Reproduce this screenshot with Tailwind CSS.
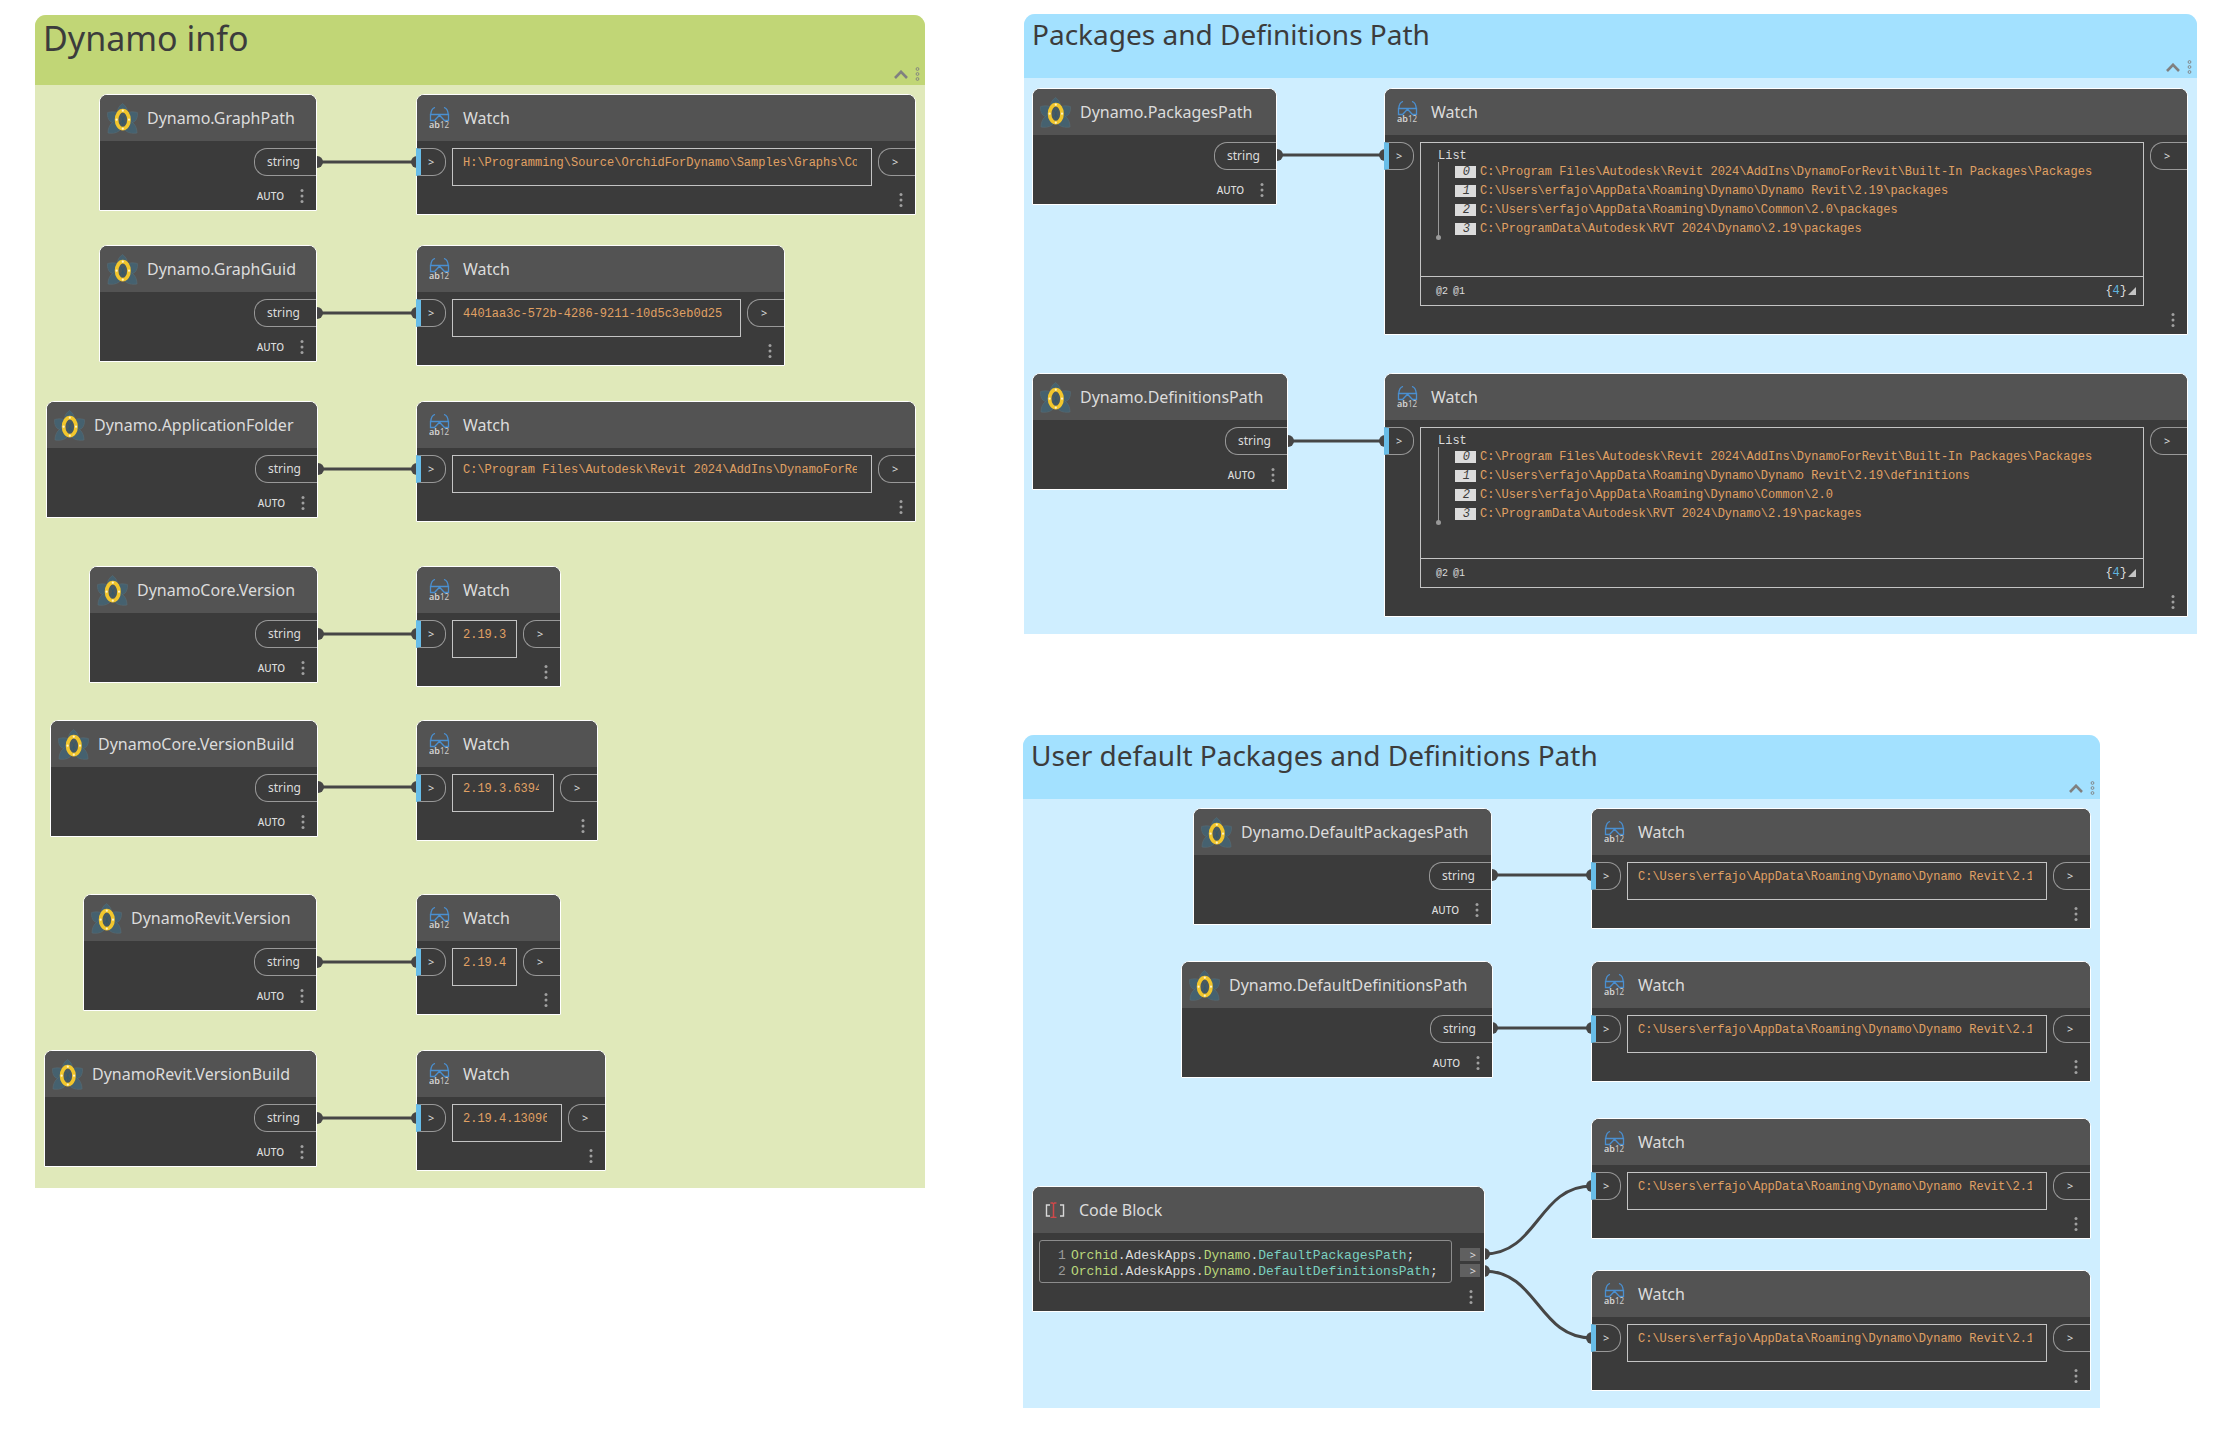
<!DOCTYPE html>
<html lang="en">
<head>
<meta charset="utf-8">
<meta name="viewport" content="width=device-width, initial-scale=1">
<title>Dynamo graph</title>
<script src="https://cdn.jsdelivr.net/npm/@tailwindcss/browser@4"></script>
</head>
<body class="bg-white font-['Noto_Sans','Open_Sans',sans-serif] text-[#dcdcdc]">

<!-- Shared icons -->
<svg class="hidden" aria-hidden="true">
  <symbol id="orchid" viewBox="0 0 31 31">
    <g fill="#45616f" stroke="#5b707a" stroke-width=".5">
      <path d="M15.500 18C8.500 13 9 5 15.500 .5C22 5 22.500 13 15.500 18Z"/>
      <path d="M15.500 18C15 9.500 8 7.500 .6 9.500C-.2 17 4 23 15.500 18Z"/>
      <path d="M15.500 18C16 9.500 23 7.500 30.400 9.500C31.200 17 27 23 15.500 18Z"/>
      <path d="M15.500 17C6 16 1 22 1 30C9 31.500 17 28 15.500 17Z"/>
      <path d="M15.500 17C25 16 30 22 30 30C22 31.500 14 28 15.500 17Z"/>
    </g>
    <ellipse cx="15.800" cy="16.700" rx="6.200" ry="9" fill="#4a5960" stroke="#f2c62c" stroke-width="3.700"/>
    <path d="M13.500 12.500L15.800 16L18 12.500M15.800 16V23M13 21L15.800 17L18.500 21" fill="none" stroke="#35596a" stroke-width="1"/>
    <g fill="#fff3c4"><circle cx="15.800" cy="7.700" r="1.100"/><circle cx="15.800" cy="25.700" r="1.100"/><circle cx="9.600" cy="16.700" r="1.100"/><circle cx="22" cy="16.700" r="1.100"/></g>
  </symbol>
  <symbol id="goggles" viewBox="0 0 21 22">
    <g fill="none" stroke="#4a8fd0" stroke-width="1.300">
      <path d="M6 .5C3.300 1.300 2 4.500 1.800 7.500"/>
      <path d="M15 .5C17.700 1.300 19 4.500 19.200 7.500"/>
      <path d="M1.500 7.500H19.500V13.500H15.500L10.500 8.300L5.500 13.500H1.500Z"/>
    </g>
    <text x="0" y="20.500" font-family="Noto Sans, sans-serif" font-size="9" font-weight="600" fill="#d4d4d4">ab</text>
    <text x="11" y="20.500" font-family="Noto Sans, sans-serif" font-size="8" fill="#cccccc">12</text>
  </symbol>
  <symbol id="brackets" viewBox="0 0 20 16">
    <path d="M5 3H1.500V14H5M15 3H18.500V14H15" fill="none" stroke="#d8d8d8" stroke-width="1.400"/>
    <path d="M5.500 1H7.500L8.500 2L9.500 1H11.500M8.500 2V14.500M5.500 15.500H7.500L8.500 14.500L9.500 15.500H11.500" fill="none" stroke="#d0484a" stroke-width="1.500"/>
  </symbol>
  <symbol id="dots" viewBox="0 0 4 14">
    <g fill="#a0a0a0"><circle cx="2" cy="1.600" r="1.500"/><circle cx="2" cy="7" r="1.500"/><circle cx="2" cy="12.400" r="1.500"/></g>
  </symbol>
  <symbol id="rings" viewBox="0 0 5 14">
    <g fill="none" stroke="#808080" stroke-width=".9"><circle cx="2.500" cy="2" r="1.400"/><circle cx="2.500" cy="7" r="1.400"/><circle cx="2.500" cy="12" r="1.400"/></g>
  </symbol>
  <symbol id="chevron" viewBox="0 0 14 9">
    <path d="M1 8L7 1.800L13 8" fill="none" stroke="#808080" stroke-width="2.600"/>
  </symbol>
</svg>

<main id="canvas" class="relative min-h-screen w-full overflow-hidden">

  <section class="absolute left-[35px] top-[15px] h-[1173px] w-[890px] overflow-hidden rounded-t-[11px] bg-[#e0e9ba]">
    <header class="flex h-[70px] justify-between bg-[#c1d676] pl-2 pr-[5px]">
      <h2 class="text-[34px] leading-[46px] text-[#3c3c3c]">Dynamo info</h2>
      <div class="mb-1 flex items-center gap-[7px] self-end">
        <button aria-label="Collapse group"><svg class="h-[9px] w-[14px]"><use href="#chevron"/></svg></button>
        <button aria-label="Group menu"><svg class="h-[14px] w-[5px]"><use href="#rings"/></svg></button>
      </div>
    </header>
  </section>

  <section class="absolute left-[1024px] top-[14px] h-[620px] w-[1173px] overflow-hidden rounded-t-[11px] bg-[#cfeeff]">
    <header class="flex h-16 justify-between bg-[#a3e1ff] pl-2 pr-[5px]">
      <h2 class="text-[28px] leading-10 text-[#3c3c3c]">Packages and Definitions Path</h2>
      <div class="mb-1 flex items-center gap-[7px] self-end">
        <button aria-label="Collapse group"><svg class="h-[9px] w-[14px]"><use href="#chevron"/></svg></button>
        <button aria-label="Group menu"><svg class="h-[14px] w-[5px]"><use href="#rings"/></svg></button>
      </div>
    </header>
  </section>

  <section class="absolute left-[1023px] top-[735px] h-[673px] w-[1077px] overflow-hidden rounded-t-[11px] bg-[#cfeeff]">
    <header class="flex h-16 justify-between bg-[#a3e1ff] pl-2 pr-[5px]">
      <h2 class="text-[28px] leading-10 text-[#3c3c3c]">User default Packages and Definitions Path</h2>
      <div class="mb-1 flex items-center gap-[7px] self-end">
        <button aria-label="Collapse group"><svg class="h-[9px] w-[14px]"><use href="#chevron"/></svg></button>
        <button aria-label="Group menu"><svg class="h-[14px] w-[5px]"><use href="#rings"/></svg></button>
      </div>
    </header>
  </section>

  <svg id="wires" class="absolute inset-0 h-full w-full" aria-hidden="true"></svg>

  <!-- Code block node -->
  <article class="absolute left-[1032px] top-[1186px] w-[453px] rounded-t-lg border border-white bg-[#3b3b3b]">
    <header class="flex h-[46px] items-center gap-[14px] rounded-t-[7px] bg-[#535353] pl-3">
      <svg class="h-4 w-5"><use href="#brackets"/></svg>
      <h3 class="text-[16px] leading-5">Code Block</h3>
    </header>
    <div class="flex gap-2 pl-1.5 pr-1 pt-[7px]">
      <div class="min-w-0 flex-1 rounded-[3px] border border-[#8c8c8c] pb-0.5 pl-[18px] pt-[7px] font-['Liberation_Mono',monospace] text-[13px] leading-4">
        <div class="flex gap-[5px]"><span class="w-2 text-[#9a9a9a]">1</span><code class="whitespace-pre font-['Liberation_Mono',monospace]"><span class="text-[#b9d77c]">Orchid</span>.AdeskApps.<span class="text-[#b9d77c]">Dynamo</span>.<span class="text-[#7bd1c1]">DefaultPackagesPath</span>;</code></div>
        <div class="flex gap-[5px]"><span class="w-2 text-[#9a9a9a]">2</span><code class="whitespace-pre font-['Liberation_Mono',monospace]"><span class="text-[#b9d77c]">Orchid</span>.AdeskApps.<span class="text-[#b9d77c]">Dynamo</span>.<span class="text-[#7bd1c1]">DefaultDefinitionsPath</span>;</code></div>
      </div>
      <div class="flex w-5 flex-col gap-[3px] pt-2">
        <button class="h-[13px] bg-[#606060] pl-1.5 text-[11px] leading-[13px]">&gt;</button>
        <button class="h-[13px] bg-[#606060] pl-1.5 text-[11px] leading-[13px]">&gt;</button>
      </div>
    </div>
    <footer class="mb-[7px] mt-[7px] flex h-[14px] justify-end pr-[11px]">
      <button aria-label="Node menu"><svg class="h-[14px] w-1"><use href="#dots"/></svg></button>
    </footer>
  </article>
</main>

<script>
const canvas = document.getElementById('canvas');
const add = html => canvas.insertAdjacentHTML('beforeend', html);

// Nodes that read one Dynamo property: [title, position and width]
const sources = [
  ['Dynamo.GraphPath', 'left-[99px] top-[94px] w-[218px]'],
  ['Dynamo.GraphGuid', 'left-[99px] top-[245px] w-[218px]'],
  ['Dynamo.ApplicationFolder', 'left-[46px] top-[401px] w-[272px]'],
  ['DynamoCore.Version', 'left-[89px] top-[566px] w-[229px]'],
  ['DynamoCore.VersionBuild', 'left-[50px] top-[720px] w-[268px]'],
  ['DynamoRevit.Version', 'left-[83px] top-[894px] w-[234px]'],
  ['DynamoRevit.VersionBuild', 'left-[44px] top-[1050px] w-[273px]'],
  ['Dynamo.PackagesPath', 'left-[1032px] top-[88px] w-[245px]'],
  ['Dynamo.DefinitionsPath', 'left-[1032px] top-[373px] w-[256px]'],
  ['Dynamo.DefaultPackagesPath', 'left-[1193px] top-[808px] w-[299px]'],
  ['Dynamo.DefaultDefinitionsPath', 'left-[1181px] top-[961px] w-[312px]'],
];

for (const [title, place] of sources) add(`
  <article class="absolute ${place} rounded-t-lg border border-white bg-[#3b3b3b]">
    <header class="flex h-[46px] items-center gap-[9px] rounded-t-[7px] bg-[#535353] pl-[7px]">
      <svg class="h-[31px] w-[31px] shrink-0"><use href="#orchid"/></svg>
      <h3 class="whitespace-nowrap text-[16px] leading-5">${title}</h3>
    </header>
    <div class="flex justify-end pt-[7px]">
      <div class="h-7 w-[62px] rounded-l-[13px] border border-r-0 border-[#999] pl-3 text-[12px] leading-[26px]">string</div>
    </div>
    <footer class="mb-[7px] mt-[13px] flex h-[14px] items-center justify-end gap-4 pr-3">
      <span class="text-[10px] font-medium leading-[14px]">AUTO</span>
      <button aria-label="Node menu"><svg class="h-[14px] w-1"><use href="#dots"/></svg></button>
    </footer>
  </article>`);

const watchNode = (place, content) => `
  <article class="absolute ${place} rounded-t-lg border border-white bg-[#3b3b3b]">
    <header class="flex h-[46px] items-center gap-[13px] rounded-t-[7px] bg-[#535353] pl-3">
      <svg class="h-[22px] w-[21px] shrink-0"><use href="#goggles"/></svg>
      <h3 class="text-[16px] leading-5">Watch</h3>
    </header>
    <div class="flex items-start gap-1.5 pt-[7px]">
      <div class="-ml-px h-7 w-[30px] rounded-r-[13px] border border-l-[5px] border-[#999] border-l-[#68bde8] pl-[7px] text-[11px] leading-[26px]">&gt;</div>
      ${content}
      <div class="h-7 w-[37px] rounded-l-[13px] border border-r-0 border-[#999] pl-[13px] text-[11px] leading-[26px]">&gt;</div>
    </div>
    <footer class="mb-[7px] mt-[7px] flex h-[14px] justify-end pr-3">
      <button aria-label="Node menu"><svg class="h-[14px] w-1"><use href="#dots"/></svg></button>
    </footer>
  </article>`;

// Watch nodes that show one string: [value, position and width, right padding]
const userPath = 'C:\\Users\\erfajo\\AppData\\Roaming\\Dynamo\\Dynamo Revit\\2.1';
const watches = [
  ['H:\\Programming\\Source\\OrchidForDynamo\\Samples\\Graphs\\Co', 'left-[416px] top-[94px] w-[500px]', 'pr-3.5'],
  ['4401aa3c-572b-4286-9211-10d5c3eb0d25', 'left-[416px] top-[245px] w-[369px]', 'pr-2'],
  ['C:\\Program Files\\Autodesk\\Revit 2024\\AddIns\\DynamoForRe', 'left-[416px] top-[401px] w-[500px]', 'pr-3.5'],
  ['2.19.3', 'left-[416px] top-[566px] w-[145px]', 'pr-2'],
  ['2.19.3.6394', 'left-[416px] top-[720px] w-[182px]', 'pr-3.5'],
  ['2.19.4', 'left-[416px] top-[894px] w-[145px]', 'pr-2'],
  ['2.19.4.13096', 'left-[416px] top-[1050px] w-[190px]', 'pr-3.5'],
  [userPath, 'left-[1591px] top-[808px] w-[500px]', 'pr-3.5'],
  [userPath, 'left-[1591px] top-[961px] w-[500px]', 'pr-3.5'],
  [userPath, 'left-[1591px] top-[1118px] w-[500px]', 'pr-3.5'],
  [userPath, 'left-[1591px] top-[1270px] w-[500px]', 'pr-3.5'],
];

for (const [value, place, padding] of watches) add(watchNode(place, `
  <div class="h-[38px] min-w-0 flex-1 overflow-hidden border border-[#c4c4c4] pl-2.5 ${padding} pt-[5px]">
    <input readonly aria-label="Watched value" value="${value}" class="block h-[18px] w-full bg-transparent font-['Liberation_Mono',monospace] text-[12px] leading-[18px] text-[#e0a164] outline-none">
  </div>`));

// Watch nodes that show a list: [items, position and width, list height]
const lists = [
  [['C:\\Program Files\\Autodesk\\Revit 2024\\AddIns\\DynamoForRevit\\Built-In Packages\\Packages',
    'C:\\Users\\erfajo\\AppData\\Roaming\\Dynamo\\Dynamo Revit\\2.19\\packages',
    'C:\\Users\\erfajo\\AppData\\Roaming\\Dynamo\\Common\\2.0\\packages',
    'C:\\ProgramData\\Autodesk\\RVT 2024\\Dynamo\\2.19\\packages'],
    'left-[1384px] top-[88px] w-[804px]', 'h-[164px]'],
  [['C:\\Program Files\\Autodesk\\Revit 2024\\AddIns\\DynamoForRevit\\Built-In Packages\\Packages',
    'C:\\Users\\erfajo\\AppData\\Roaming\\Dynamo\\Dynamo Revit\\2.19\\definitions',
    'C:\\Users\\erfajo\\AppData\\Roaming\\Dynamo\\Common\\2.0',
    'C:\\ProgramData\\Autodesk\\RVT 2024\\Dynamo\\2.19\\packages'],
    'left-[1384px] top-[373px] w-[804px]', 'h-[161px]'],
];

for (const [items, place, height] of lists) add(watchNode(place, `
  <div class="flex ${height} min-w-0 flex-1 flex-col border border-[#c4c4c4] pt-[5px] font-['Liberation_Mono',monospace] text-[12px]">
    <div class="h-[14px] pl-[17px] leading-4">List</div>
    <ul class="relative ml-[17px] border-l border-[#999] pl-4">
      ${items.map((item, i) => `<li class="flex h-[19px] items-center gap-1">
        <span class="h-3 w-[21px] bg-[#dcdcdc] pr-1.5 text-right italic leading-3 text-[#3c3c3c]">${i}</span>
        <span class="whitespace-nowrap text-[#e0a164]">${item}</span></li>`).join('')}
      <li class="absolute -bottom-0.5 -left-[3px] h-[5px] w-[5px] rounded-full bg-[#999]" role="presentation"></li>
    </ul>
    <div class="mt-auto flex h-[29px] items-center justify-between border-t border-[#c4c4c4] pl-[15px] pr-[7px]">
      <div class="flex gap-[5px] text-[10px]"><span>@2</span><span>@1</span></div>
      <div class="flex items-center gap-px text-[12px]">
        <span>{<span class="text-[#5fb4de]">4</span>}</span>
        <svg class="h-2 w-2" viewBox="0 0 8 8"><path d="M8 0V8H0Z" fill="#c4c4c4"/></svg>
      </div>
    </div>
  </div>`));

// Wires: [x1, y1, x2, y2], each with a round connector at both ends
const wires = [
  [317, 162, 417, 162], [317, 313, 417, 313], [318, 469, 417, 469], [318, 634, 417, 634],
  [318, 787, 417, 787], [317, 962, 417, 962], [317, 1118, 417, 1118],
  [1277, 155, 1385, 155], [1288, 441, 1385, 441], [1492, 875, 1592, 875], [1492, 1028, 1592, 1028],
  [1484, 1254, 1592, 1186], [1484, 1271, 1592, 1338],
];
document.getElementById('wires').innerHTML = wires.map(([x1, y1, x2, y2]) => {
  const m = (x1 + x2) / 2;
  return `<path d="M${x1} ${y1}C${m} ${y1} ${m} ${y2} ${x2} ${y2}" fill="none" stroke="#464646" stroke-width="3"/>
    <circle cx="${x1}" cy="${y1}" r="6" fill="#464646"/><circle cx="${x2}" cy="${y2}" r="6" fill="#464646"/>`;
}).join('');
</script>
</body>
</html>
